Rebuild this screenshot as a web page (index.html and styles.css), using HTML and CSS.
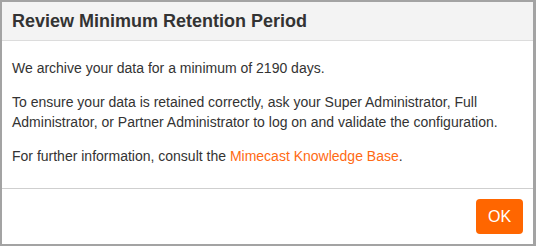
FILE: index.html
```html
<!DOCTYPE html>
<html lang="en">
<head>
    <meta charset="UTF-8">
    <meta name="viewport" content="width=device-width, initial-scale=1.0">
    <title>Review Minimum Retention Period</title>
    <link rel="stylesheet" href="styles.css">
</head>
<body>
    <div class="modal">
        <div class="modal-header">
            <h3 class="modal-titulo">Review Minimum Retention Period</h3>
        </div>
        <div class="modal-cuerpo">
            <p>We archive your data for a minimum of 2190 days.</p>
            <p>To ensure your data is retained correctly, ask your Super Administrator, Full Administrator, or Partner Administrator to log on and validate the configuration.</p>
            <p>For further information, consult the <a href="#">Mimecast Knowledge Base</a>.</p>
        </div>
        <div class="modal-footer">
            <button class="boton-ok">OK</button>
        </div>
    </div>
</body>
</html>
```
FILE: styles.css
```css
* {
    box-sizing: border-box;
}

body {
    margin: 0;
    font-family: "Liberation Sans", Arial, sans-serif;
    color: #333;
}

.modal {
    width: 536px;
    height: 246px;
    border: 2px solid #a3a3a3;
    border-right-width: 3px;
    display: flex;
    flex-direction: column;
    background: #fff;
}

.modal-header {
    height: 39px;
    background: #f3f3f3;
    border-bottom: 1px solid #dcdcdc;
    padding: 0 10px;
    display: flex;
    align-items: center;
}

.modal-titulo {
    margin: 0;
    font-size: 18px;
    font-weight: bold;
    color: #333;
}

.modal-cuerpo {
    flex: 1;
    padding: 17px 10px 0;
    font-size: 14px;
    line-height: 20px;
}

.modal-cuerpo p {
    margin: 0 0 14px;
}

.modal-cuerpo a {
    color: #ff6a13;
    text-decoration: none;
}

.modal-footer {
    border-top: 1px solid #cfcfcf;
    padding: 10px;
    display: flex;
    justify-content: flex-end;
    height: 56px;
}

.boton-ok {
    width: 47px;
    height: 35px;
    background: #ff6600;
    color: #fff;
    border: none;
    border-radius: 4px;
    font-family: "Liberation Sans", Arial, sans-serif;
    font-size: 16px;
    cursor: pointer;
}
```
